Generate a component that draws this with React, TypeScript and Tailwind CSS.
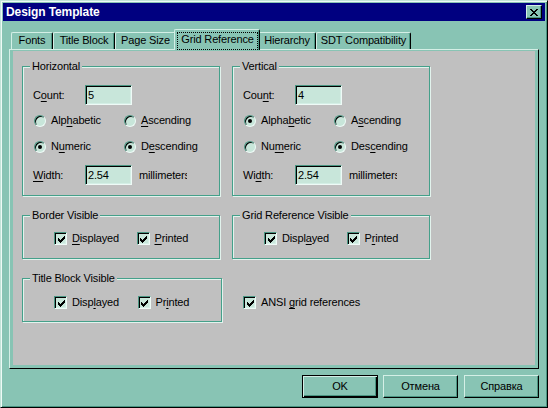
import React from "react";

function U({ text, i }: { text: string; i: number }) {
  return (
    <>
      {text.slice(0, i)}
      <span className="underline underline-offset-[2px]">{text[i]}</span>
      {text.slice(i + 1)}
    </>
  );
}

function Radio({ checked }: { checked?: boolean }) {
  return (
    <span className="flex h-[12px] w-[12px] shrink-0 items-center justify-center rounded-full border border-t-[#4a9582] border-l-[#4a9582] border-r-[#eefaf6] border-b-[#eefaf6] bg-[#c8e6da] shadow-[inset_1px_1px_0_#000]">
      {checked && <span className="h-[4px] w-[4px] rounded-full bg-black" />}
    </span>
  );
}

function RadioItem({ label, u, checked }: { label: string; u: number; checked?: boolean }) {
  return (
    <div className="flex w-[90px] items-center gap-[5px] pl-[1px]">
      <Radio checked={checked} />
      <span className="whitespace-nowrap">
        <U text={label} i={u} />
      </span>
    </div>
  );
}

function Check() {
  return (
    <span className="flex h-[13px] w-[13px] shrink-0 items-center justify-center border border-t-[#4a9582] border-l-[#4a9582] border-r-[#eefaf6] border-b-[#eefaf6] bg-[#c8e6da] shadow-[inset_1px_1px_0_#000,inset_-1px_-1px_0_#d4efe6]">
      <svg width="7" height="7" viewBox="0 0 7 7" shapeRendering="crispEdges" className="ml-[1px] mt-[1px]">
        <rect x="6" y="0" width="1" height="1" />
        <rect x="5" y="1" width="2" height="1" />
        <rect x="0" y="2" width="1" height="1" />
        <rect x="4" y="2" width="3" height="1" />
        <rect x="0" y="3" width="2" height="1" />
        <rect x="3" y="3" width="3" height="1" />
        <rect x="0" y="4" width="5" height="1" />
        <rect x="1" y="5" width="3" height="1" />
        <rect x="2" y="6" width="1" height="1" />
      </svg>
    </span>
  );
}

function CheckItem({ label, u, className = "w-[94px]" }: { label: string; u: number; className?: string }) {
  return (
    <div className={"flex items-center gap-[5px] " + className}>
      <Check />
      <span className="whitespace-nowrap">
        <U text={label} i={u} />
      </span>
    </div>
  );
}

function Field({ value }: { value: string }) {
  return (
    <div className="h-[20px] w-[47px] shrink-0 border border-t-[#4a9582] border-l-[#4a9582] border-r-[#eefaf6] border-b-[#eefaf6] bg-[#c8e6da] pl-[2px] leading-[18px] shadow-[inset_1px_1px_0_#000,inset_-1px_-1px_0_#d4efe6]">
      {value}
    </div>
  );
}

function Group({ title, className, children }: { title: string; className: string; children: React.ReactNode }) {
  return (
    <div className={"relative shrink-0 border border-[#45a08a] shadow-[inset_1px_1px_0_#e2f3ed,1px_1px_0_#e2f3ed] " + className}>
      <span className="absolute -top-[7px] left-[7px] whitespace-nowrap bg-[#c0c0c0] px-[2px] leading-[13px]">{title}</span>
      {children}
    </div>
  );
}

function Axis({ title, count, u }: { title: string; count: string; u: number[] }) {
  const alpha = title === "Vertical";
  return (
    <Group title={title} className="h-[130px] w-[198px] pl-[10px] pt-[18px]">
      <div className="flex h-[20px] items-center">
        <span className="w-[52px]">
          <U text="Count:" i={u[0]} />
        </span>
        <Field value={count} />
      </div>
      <div className="mt-[9px] flex h-[13px] items-center">
        <RadioItem label="Alphabetic" u={u[1]} checked={alpha} />
        <RadioItem label="Ascending" u={u[2]} />
      </div>
      <div className="mt-[13px] flex h-[13px] items-center">
        <RadioItem label="Numeric" u={u[3]} checked={!alpha} />
        <RadioItem label="Descending" u={u[4]} checked />
      </div>
      <div className="mt-[12px] flex h-[20px] items-center">
        <span className="w-[52px]">
          <U text="Width:" i={u[5]} />
        </span>
        <Field value="2.54" />
        <span className="ml-[7px] w-[48px] overflow-hidden whitespace-nowrap">millimeters</span>
      </div>
    </Group>
  );
}

function Tab({ label, w }: { label: string; w: string }) {
  return (
    <div className={"flex h-[17px] items-start justify-center rounded-t-[2px] border-l border-t border-r border-l-[#d4efe6] border-t-[#d4efe6] border-r-black pt-[1px] shadow-[inset_-1px_0_0_#4a9582] " + w}>
      <span className="whitespace-nowrap">{label}</span>
    </div>
  );
}

function Button({ label, w, def }: { label: string; w: string; def?: boolean }) {
  if (def) {
    return (
      <div className={"flex h-[23px] items-center justify-center border border-black shadow-[inset_1px_1px_0_#d4efe6,inset_-1px_-1px_0_#000,inset_-2px_-2px_0_#4a9582] " + w}>
        {label}
      </div>
    );
  }
  return (
    <div className={"flex h-[23px] items-center justify-center border border-t-[#d4efe6] border-l-[#d4efe6] border-r-black border-b-black shadow-[inset_-1px_-1px_0_#4a9582] " + w}>
      {label}
    </div>
  );
}

export default function App() {
  return (
    <div className="h-[408px] w-[548px] overflow-hidden border border-t-[#c2e4d8] border-l-[#c2e4d8] border-r-black border-b-black bg-[#88c4b4] p-[2px] text-[11px] leading-[13px] tracking-[-0.15px] text-black shadow-[inset_1px_1px_0_#eefaf6,inset_-1px_-1px_0_#4a9582] [font-family:'Liberation_Sans',Arial,sans-serif]">
      {/* title bar */}
      <div className="flex h-[18px] items-center justify-between bg-[#000080] pl-[3px] pr-[3px]">
        <span className="text-[12px] font-bold tracking-[-0.1px] text-white">Design Template</span>
        <div className="flex h-[14px] w-[16px] items-center justify-center border border-t-[#d4efe6] border-l-[#d4efe6] border-r-black border-b-black bg-[#88c4b4] shadow-[inset_-1px_-1px_0_#4a9582]">
          <svg width="8" height="7" viewBox="0 0 8 7" shapeRendering="crispEdges" className="-ml-[1px]">
            <path d="M0 0h2v1h-2zM6 0h2v1h-2zM1 1h2v1h-2zM5 1h2v1h-2zM2 2h4v1h-4zM3 3h2v1h-2zM2 4h4v1h-4zM1 5h2v1h-2zM5 5h2v1h-2zM0 6h2v1h-2zM6 6h2v1h-2z" />
          </svg>
        </div>
      </div>

      {/* tabs */}
      <div className="ml-[8px] mt-[8px] flex h-[20px] items-end">
        <Tab label="Fonts" w="w-[42px]" />
        <Tab label="Title Block" w="w-[62px]" />
        <Tab label="Page Size" w="w-[61px]" />
        <div className="relative z-10 -mx-[2px] -mb-[1px] flex h-[21px] w-[86px] rounded-t-[2px] border-l border-t border-r border-l-[#d4efe6] border-t-[#d4efe6] border-r-black bg-[#88c4b4] pl-[2px] pr-[1px] pt-[2px] shadow-[inset_-1px_0_0_#4a9582]">
          <span className="flex flex-1 justify-center border border-dotted border-black">
            <span className="whitespace-nowrap">Grid Reference</span>
          </span>
        </div>
        <Tab label="Hierarchy" w="w-[58px]" />
        <Tab label="SDT Compatibility" w="w-[95px]" />
      </div>

      {/* page */}
      <div className="ml-[6px] h-[320px] w-[530px] border border-t-[#d4efe6] border-l-[#d4efe6] border-r-black border-b-black pb-[3px] pl-[3px] pr-[3px] pt-[1px]">
        <div className="h-full bg-[#c0c0c0] pl-[9px] pt-[15px]">
          <div className="flex gap-[12px]">
            <Axis title="Horizontal" count="5" u={[1, 3, 0, 1, 1, 0]} />
            <Axis title="Vertical" count="4" u={[3, 5, 1, 2, 3, 2]} />
          </div>

          <div className="mt-[19px] flex gap-[12px]">
            <Group title="Border Visible" className="h-[44px] w-[198px] pl-[31px] pt-[16px]">
              <div className="flex items-center">
                <CheckItem label="Displayed" u={0} />
                <CheckItem label="Printed" u={0} />
              </div>
            </Group>
            <Group title="Grid Reference Visible" className="h-[44px] w-[198px] pl-[31px] pt-[16px]">
              <div className="flex items-center">
                <CheckItem label="Displayed" u={5} />
                <CheckItem label="Printed" u={1} />
              </div>
            </Group>
          </div>

          <div className="mt-[19px] flex">
            <Group title="Title Block Visible" className="h-[44px] w-[200px] pl-[31px] pt-[17px]">
              <div className="flex items-center">
                <CheckItem label="Displayed" u={4} />
                <CheckItem label="Printed" u={2} />
              </div>
            </Group>
            <div className="ml-[21px] pt-[18px]">
              <CheckItem label="ANSI grid references" u={5} className="" />
            </div>
          </div>
        </div>
      </div>

      {/* buttons */}
      <div className="ml-[6px] mt-[6px] flex w-[530px] justify-end">
        <Button label="OK" w="w-[76px] mr-[5px]" def />
        <Button label="Отмена" w="w-[75px] mr-[6px]" />
        <Button label="Справка" w="w-[75px]" />
      </div>
    </div>
  );
}
